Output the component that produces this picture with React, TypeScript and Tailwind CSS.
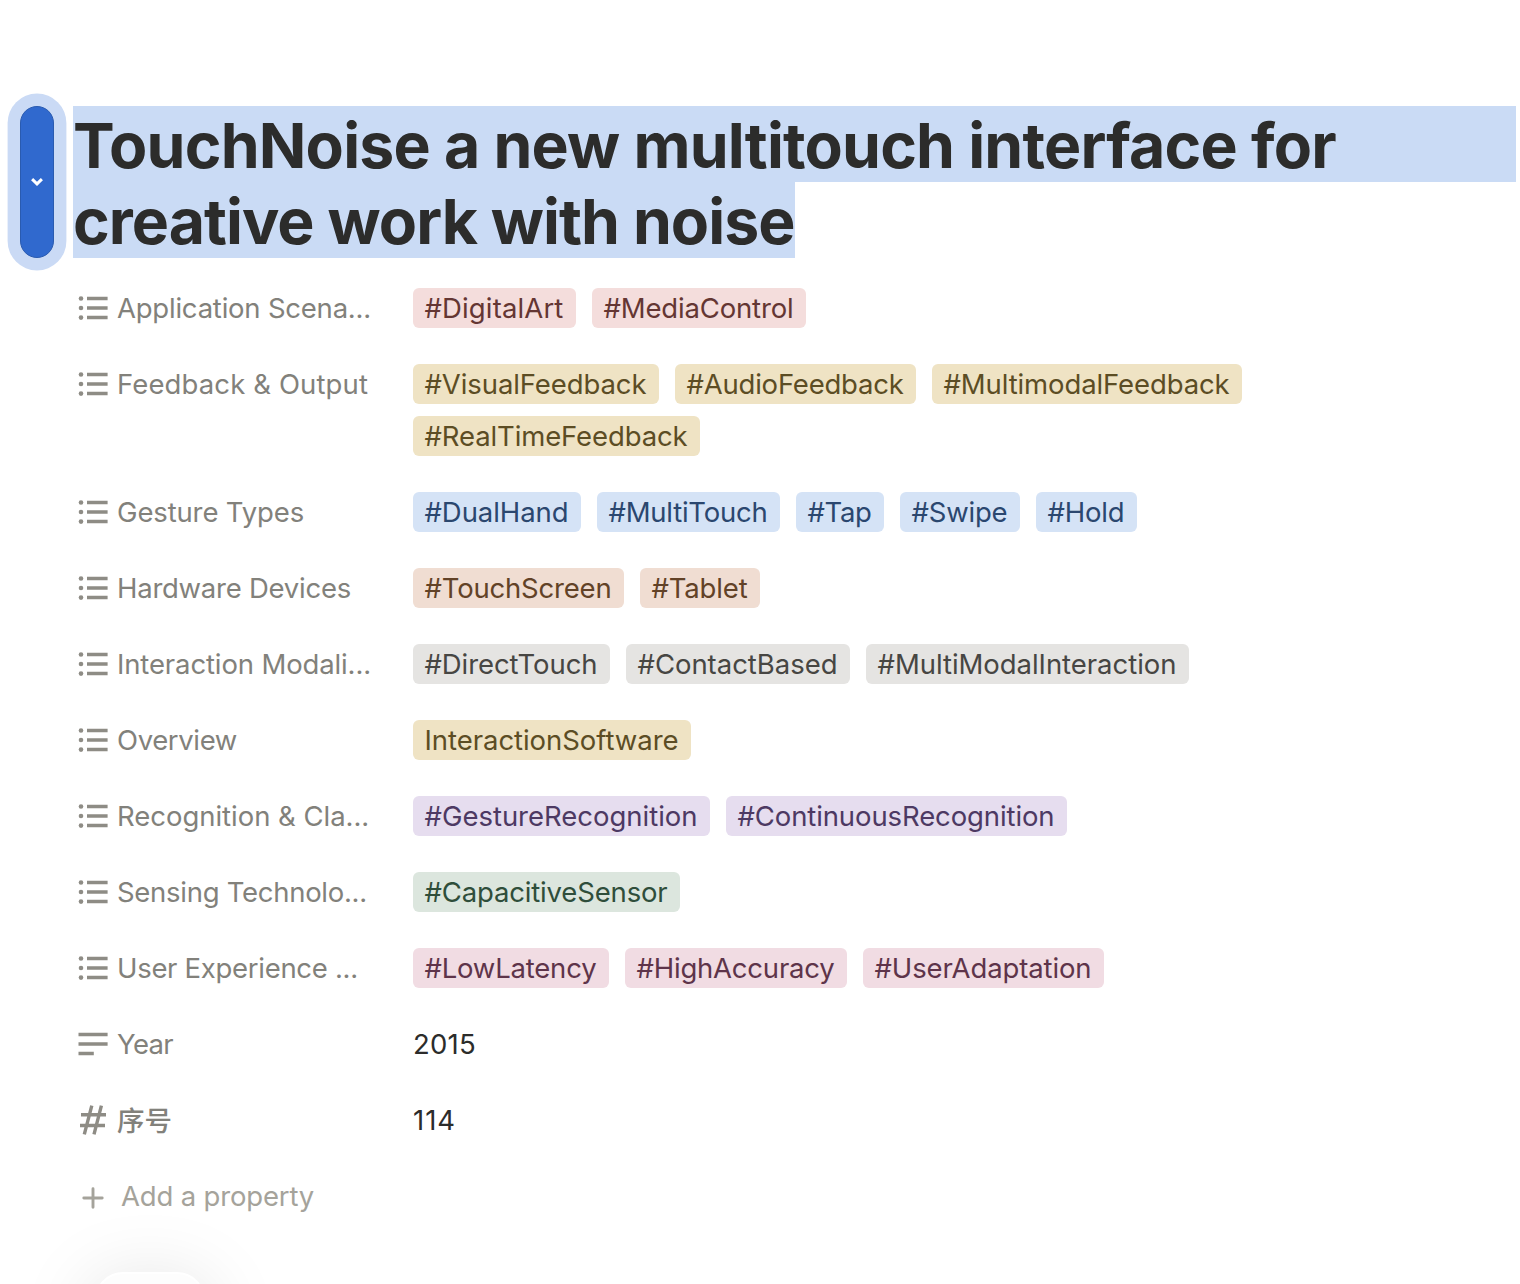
import type { ReactNode } from "react";

type Tag = [label: string, size: string];
type Property = {
  name: string;
  spacing: string;
  icon: "list" | "text" | "number";
  color?: string;
  tags?: Tag[];
  value?: string;
  valueSpacing?: string;
};

const properties: Property[] = [
  {
    name: "Application Scena...",
    spacing: "tracking-[-0.22px]",
    icon: "list",
    color: "bg-[#f4dddc] text-[#643633]",
    tags: [
      ["#DigitalArt", "w-[163px] tracking-[0.14px]"],
      ["#MediaControl", "w-[214px] tracking-[-0.16px]"],
    ],
  },
  {
    name: "Feedback & Output",
    spacing: "tracking-[0.12px]",
    icon: "list",
    color: "bg-[#efe3c4] text-[#5c4d24]",
    tags: [
      ["#VisualFeedback", "w-[246px] tracking-[-0.09px]"],
      ["#AudioFeedback", "w-[241px] tracking-[-0.21px]"],
      ["#MultimodalFeedback", "w-[310px] tracking-[-0.11px]"],
      ["#RealTimeFeedback", "w-[287px] tracking-[-0.12px]"],
    ],
  },
  {
    name: "Gesture Types",
    spacing: "tracking-[-0.14px]",
    icon: "list",
    color: "bg-[#d5e3f6] text-[#2b476f]",
    tags: [
      ["#DualHand", "w-[168px] tracking-[-0.06px]"],
      ["#MultiTouch", "w-[183px] tracking-[-0.23px]"],
      ["#Tap", "w-[88px] tracking-[-0.35px]"],
      ["#Swipe", "w-[120px] tracking-[-0.19px]"],
      ["#Hold", "w-[101px] tracking-[-0.18px]"],
    ],
  },
  {
    name: "Hardware Devices",
    spacing: "tracking-[-0.25px]",
    icon: "list",
    color: "bg-[#f0ddd2] text-[#624227]",
    tags: [
      ["#TouchScreen", "w-[211px] tracking-[-0.19px]"],
      ["#Tablet", "w-[120px] tracking-[-0.16px]"],
    ],
  },
  {
    name: "Interaction Modali...",
    spacing: "tracking-[-0.13px]",
    icon: "list",
    color: "bg-[#e5e4e2] text-[#474643]",
    tags: [
      ["#DirectTouch", "w-[197px] tracking-[-0.08px]"],
      ["#ContactBased", "w-[224px] tracking-[-0.03px]"],
      ["#MultiModalInteraction", "w-[323px] tracking-[-0.04px]"],
    ],
  },
  {
    name: "Overview",
    spacing: "tracking-[-0.37px]",
    icon: "list",
    color: "bg-[#efe3c4] text-[#5c4d24]",
    tags: [["InteractionSoftware", "w-[278px] tracking-[-0.05px]"]],
  },
  {
    name: "Recognition & Cla...",
    spacing: "tracking-[-0.03px]",
    icon: "list",
    color: "bg-[#e6ddef] text-[#4d3963]",
    tags: [
      ["#GestureRecognition", "w-[297px] tracking-[-0.02px]"],
      ["#ContinuousRecognition", "w-[341px] tracking-[-0.11px]"],
    ],
  },
  {
    name: "Sensing Technolo...",
    spacing: "tracking-[-0.28px]",
    icon: "list",
    color: "bg-[#dce6de] text-[#2f4e3b]",
    tags: [["#CapacitiveSensor", "w-[267px] tracking-[-0.16px]"]],
  },
  {
    name: "User Experience ...",
    spacing: "tracking-[-0.3px]",
    icon: "list",
    color: "bg-[#f1dce3] text-[#5e344a]",
    tags: [
      ["#LowLatency", "w-[196px] tracking-[-0.2px]"],
      ["#HighAccuracy", "w-[222px] tracking-[-0.21px]"],
      ["#UserAdaptation", "w-[241px] tracking-[-0.12px]"],
    ],
  },
  {
    name: "Year",
    spacing: "tracking-[-0.65px]",
    icon: "text",
    value: "2015",
    valueSpacing: "tracking-[0.22px]",
  },
  {
    name: "序号",
    spacing: "pt-px font-medium",
    icon: "number",
    value: "114",
    valueSpacing: "tracking-[0.95px]",
  },
];

const iconShapes: Record<Property["icon"], ReactNode> = {
  list: (
    <>
      <path d="M9 6.5H29.6M9 16H29.6M9 25.6H29.6" />
      <g fill="currentColor" stroke="none">
        <circle cx="3" cy="6.5" r="2.3" />
        <circle cx="3" cy="16" r="2.3" />
        <circle cx="3" cy="25.6" r="2.3" />
      </g>
    </>
  ),
  text: <path d="M.5 6.4H29.6M.5 16H29.6M.5 25.6H15.8" />,
  number: (
    <path d="M3 10.7H28M2 21.5H27M13.8 1.6 6.3 30.4M23.4 1.6 16 30.4" strokeWidth="3.4" />
  ),
};

function PropertyIcon({ kind }: { kind: Property["icon"] }) {
  return (
    <svg
      viewBox="0 0 32 32"
      className="size-8 shrink-0 text-[#8e8c85]"
      fill="none"
      stroke="currentColor"
      strokeWidth="3.5"
    >
      {iconShapes[kind]}
    </svg>
  );
}

function PropertyRow({ property }: { property: Property }) {
  return (
    <div className="flex items-start">
      <div className="flex h-10 w-[335px] shrink-0 items-center text-[#82817b]">
        <PropertyIcon kind={property.icon} />
        <span className={`ml-[7px] h-10 whitespace-nowrap ${property.spacing}`}>{property.name}</span>
      </div>
      {property.tags ? (
        <div className="flex flex-wrap gap-x-4 gap-y-3">
          {property.tags.map(([label, size]) => (
            <span
              key={label}
              className={`h-10 rounded-md pl-[11.5px] whitespace-nowrap ${property.color} ${size}`}
            >
              {label}
            </span>
          ))}
        </div>
      ) : (
        <span className={`h-10 text-[#2c2c2b] ${property.valueSpacing}`}>{property.value}</span>
      )}
    </div>
  );
}

export default function App() {
  return (
    <div className="relative h-[1284px] w-[1520px] overflow-hidden bg-white pt-[106px] font-['Inter','Noto_Sans_CJK_SC',sans-serif] text-[27.5px] leading-[41px]">
      <header className="flex items-start pl-5">
        <button className="flex h-[152px] w-[34px] shrink-0 items-center justify-center rounded-full border border-[#2a5bb0] bg-[#3069ce] text-white shadow-[0_0_0_12.4px_#cadaf5]">
          <svg viewBox="0 0 12 8" className="h-2 w-3 shrink-0" fill="none" stroke="currentColor" strokeWidth="3">
            <path d="M1.1 1.2 6 5.9 10.9 1.2" />
          </svg>
        </button>
        <h1 className="ml-[19px] w-[1443px] text-[62.5px] leading-[78px] font-bold whitespace-nowrap text-[#2c2c2b]">
          <span className="block h-[76px] bg-[#cadbf5] tracking-[-0.8px]">
            TouchNoise a new multitouch interface for
          </span>
          <span className="block h-[76px] w-[722px] bg-[#cadbf5] tracking-[-0.95px]">
            creative work with noise
          </span>
        </h1>
      </header>

      <main className="mt-[30px] flex w-[1340px] flex-col gap-9 pl-[78px]">
        {properties.map((property) => (
          <PropertyRow key={property.name} property={property} />
        ))}
        <button className="flex h-10 items-center text-[#a5a39b]">
          <svg viewBox="0 0 30 30" className="mt-1 size-[30px]" fill="none" stroke="currentColor" strokeWidth="2.9" strokeLinecap="round">
            <path d="M15 5.8V24.2M5.8 15H24.2" />
          </svg>
          <span className="ml-[13px] h-10 tracking-[-0.17px]">Add a property</span>
        </button>
      </main>

      <div className="absolute top-[1272px] left-[95px] h-20 w-[110px] rounded-[28px] border-2 border-white bg-[#fdfdfd] shadow-[0_14px_80px_rgba(0,0,0,0.15)]" />
    </div>
  );
}
